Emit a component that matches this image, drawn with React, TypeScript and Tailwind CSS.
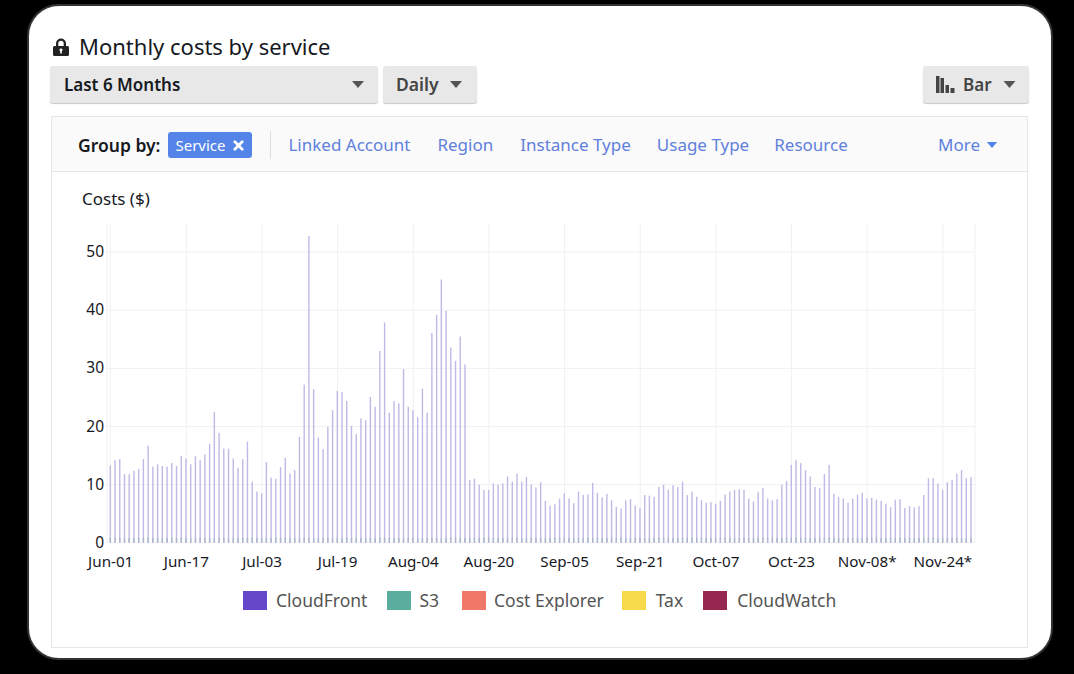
const costs = [
  13.3, 14.2, 14.4, 11.8, 11.8, 12.4, 12.7, 14.4, 16.7, 13.1, 13.5, 13.2, 13.1, 13.7, 13.2, 14.9, 14.5, 13.5, 14.9, 14.2,
  15.2, 17.0, 22.5, 18.9, 16.2, 16.2, 14.5, 12.9, 14.4, 17.4, 10.5, 8.8, 8.5, 13.9, 11.2, 11.0, 13.0, 14.6, 11.9, 12.5,
  18.2, 27.2, 52.8, 26.4, 18.1, 16.1, 19.9, 22.8, 26.1, 25.9, 24.4, 20.1, 18.7, 21.4, 21.1, 25.1, 23.4, 33.0, 37.9, 22.4,
  24.4, 24.0, 29.9, 23.4, 22.8, 21.6, 26.5, 22.4, 36.1, 39.2, 45.3, 39.9, 33.6, 31.3, 35.5, 30.7, 10.8, 11.0, 10.0, 9.1,
  9.1, 10.2, 10.0, 10.2, 11.4, 10.5, 11.9, 10.5, 11.3, 10.0, 9.5, 10.4, 7.2, 6.4, 6.6, 7.6, 8.5, 7.6, 6.8, 8.8,
  8.2, 8.3, 10.3, 8.6, 7.8, 8.4, 7.3, 6.2, 5.9, 7.3, 7.5, 6.4, 6.0, 8.2, 8.1, 7.9, 9.6, 10.0, 9.1, 9.9,
  9.6, 10.5, 8.2, 8.8, 7.9, 7.3, 6.9, 7.0, 6.7, 7.2, 8.3, 8.8, 9.1, 9.2, 9.1, 7.6, 7.1, 8.7, 9.4, 7.6,
  7.3, 7.5, 10.0, 10.6, 13.4, 14.2, 13.7, 12.5, 11.4, 9.6, 9.4, 11.8, 13.4, 8.4, 7.9, 7.6, 6.9, 7.6, 8.3, 8.6,
  7.6, 7.7, 7.4, 7.2, 6.7, 6.1, 7.4, 7.5, 6.0, 6.3, 6.1, 6.3, 8.2, 11.1, 11.1, 10.2, 9.1, 10.4, 10.8, 11.9,
  12.5, 11.1, 11.3,
];

const months = [
  "Jun-01", "Jun-17", "Jul-03", "Jul-19", "Aug-04", "Aug-20",
  "Sep-05", "Sep-21", "Oct-07", "Oct-23", "Nov-08*", "Nov-24*",
];

const legend = [
  { label: "CloudFront", swatch: "bg-[#6647c9]", gap: "mr-[20px]", text: "ml-[9px]" },
  { label: "S3", swatch: "bg-[#5aae9e]", gap: "mr-[23px]", text: "ml-[8px]" },
  { label: "Cost Explorer", swatch: "bg-[#f07868]", gap: "mr-[18px]", text: "ml-[8px]" },
  { label: "Tax", swatch: "bg-[#f6da4c]", gap: "mr-[20px]", text: "ml-[10px]" },
  { label: "CloudWatch", swatch: "bg-[#962850]", gap: "", text: "ml-[10px]" },
];

const links = [
  { label: "Linked Account", gap: "mr-[27px]" },
  { label: "Region", gap: "mr-[27px]" },
  { label: "Instance Type", gap: "mr-[26px]" },
  { label: "Usage Type", gap: "mr-[25px]" },
  { label: "Resource", gap: "" },
];

const baseY = 542.7;
const perDollar = 5.81;

function Caret({ className }: { className: string }) {
  return (
    <svg viewBox="0 0 12 7" className={className} fill="currentColor">
      <path d="M0 0h12L6 7z" />
    </svg>
  );
}

function Chart() {
  const step = (971 - 110.3) / (costs.length - 1);
  return (
    <svg viewBox="52 216 975 360" className="block h-[360px] w-[975px]">
      {[0, 10, 20, 30, 40, 50].map((v) => (
        <g key={v}>
          <line x1="106" x2="975" y1={baseY - v * perDollar} y2={baseY - v * perDollar} stroke="#f1f1f5" strokeWidth="1" />
          <text x="104" y={baseY - v * perDollar + 5} textAnchor="end" fontSize="15.5" fill="#16191f">
            {v}
          </text>
        </g>
      ))}
      <line x1="107" x2="107" y1="224" y2={baseY} stroke="#f1f1f5" />
      <line x1="975" x2="975" y1="224" y2={baseY} stroke="#f1f1f5" />
      {months.map((m, i) => (
        <g key={m}>
          <line x1={110.7 + i * 75.65} x2={110.7 + i * 75.65} y1="224" y2={baseY} stroke="#f1f1f5" />
          <text x={110.7 + i * 75.65} y="567" textAnchor="middle" fontSize="15.2" fill="#16191f">
            {m}
          </text>
        </g>
      ))}
      {costs.map((c, i) => (
        <g key={i}>
          <rect x={110.3 + i * step - 0.7} y={baseY - c * perDollar} width="1.4" height={c * perDollar} fill="#c0b9e7" />
          <rect x={110.3 + i * step - 0.7} y={baseY - 5} width="1.4" height="5" fill="#a9b6cb" />
        </g>
      ))}
    </svg>
  );
}

export default function App() {
  return (
    <div className="h-[674px] w-[1074px] overflow-hidden bg-black pl-[27px] pt-[4px] font-['Noto_Sans',sans-serif]">
      <div className="h-[656px] w-[1026px] rounded-[32px] border-2 border-[#333333] bg-white pl-[21px] pr-[22px] pt-[26px]">
        <div className="mb-[5px] flex h-[29px] items-center pl-[3px] text-[#16191f]">
          <svg viewBox="0 0 16 18" className="mr-[10px] h-[18px] w-[16px] text-[#222]" fill="currentColor">
            <path
              fillRule="evenodd"
              d="M3 8V5.500a5 5 0 0 1 10 0V8h1.500A1.500 1.500 0 0 1 16 9.500v7a1.500 1.500 0 0 1-1.500 1.500h-13A1.500 1.500 0 0 1 0 16.500v-7A1.500 1.500 0 0 1 1.500 8H3zm2.300 0h5.400V5.500a2.700 2.700 0 0 0-5.400 0V8zM8 10.500a1.500 1.500 0 0 0-.8 2.800V15.500h1.600v-2.200a1.500 1.500 0 0 0-.8-2.800z"
            />
          </svg>
          <span className="text-[22px]">Monthly costs by service</span>
        </div>

        <div className="flex h-[37px] text-[#333]">
          <div className="flex w-[328px] items-center justify-between rounded-[3px] bg-[#e8e8e8] px-[14px] shadow-[0_1px_1px_#c4c8c8]">
            <span className="text-[17px] font-semibold text-[#16191f]">Last 6 Months</span>
            <Caret className="h-[7px] w-[12px] text-[#555]" />
          </div>
          <div className="ml-[5px] flex w-[94px] items-center rounded-[3px] bg-[#e8e8e8] pl-[13px] shadow-[0_1px_1px_#c4c8c8]">
            <span className="text-[17.5px] font-semibold text-[#444]">Daily</span>
            <Caret className="ml-[11px] h-[7px] w-[12px] text-[#555]" />
          </div>
          <div className="ml-auto flex w-[106px] items-center rounded-[3px] bg-[#e8e8e8] pl-[13px] shadow-[0_1px_1px_#c4c8c8]">
            <svg viewBox="0 0 19 17" className="h-[17px] w-[19px] text-[#444]" fill="currentColor">
              <rect x="0" y="0" width="3.500" height="17" />
              <rect x="4.500" y="2" width="3.500" height="15" />
              <rect x="9.500" y="9" width="3.500" height="8" />
              <rect x="14.500" y="12" width="4" height="5" />
            </svg>
            <span className="ml-[8px] text-[17px] font-semibold text-[#444]">Bar</span>
            <Caret className="ml-[11px] h-[7px] w-[13px] text-[#555]" />
          </div>
        </div>

        <div className="mx-px mt-[13px] h-[532px] border border-[#e6e6e6]">
          <div className="flex h-[55px] items-center border-b border-[#e6e6e6] bg-[#fafafa] pl-[26px] pr-[29px] pt-[2px]">
            <span className="text-[17.5px] font-semibold text-[#16191f]">Group by:</span>
            <span className="ml-[8px] flex h-[26px] w-[84px] items-center rounded-[3px] bg-[#5584e8] pl-[7px] text-[15px] text-white">
              Service
              <svg viewBox="0 0 12 12" className="ml-[7px] h-[11px] w-[11px]" stroke="currentColor" strokeWidth="3" strokeLinecap="round">
                <path d="M2 2l8 8M10 2l-8 8" />
              </svg>
            </span>
            <span className="ml-[18px] mr-[17px] h-[28px] w-px bg-[#dedede]" />
            {links.map((l) => (
              <span key={l.label} className={`text-[17px] text-[#5f80dc] ${l.gap}`}>
                {l.label}
              </span>
            ))}
            <span className="ml-auto text-[17px] text-[#5f80dc]">More</span>
            <Caret className="ml-[6px] h-[6px] w-[12px] text-[#5584e8]" />
          </div>

          <div className="pl-[30px] pt-[15px] text-[17px] leading-[24px] text-[#16191f]">Costs ($)</div>
          <div className="mt-[5px]">
            <Chart />
          </div>
          <div className="mt-[15px] flex items-center pl-[191px]">
            {legend.map((l) => (
              <div key={l.label} className={`flex items-center ${l.gap}`}>
                <span className={`h-[19px] w-[24px] ${l.swatch}`} />
                <span className={`text-[17.5px] leading-[19px] text-[#555] ${l.text}`}>{l.label}</span>
              </div>
            ))}
          </div>
        </div>
      </div>
    </div>
  );
}
